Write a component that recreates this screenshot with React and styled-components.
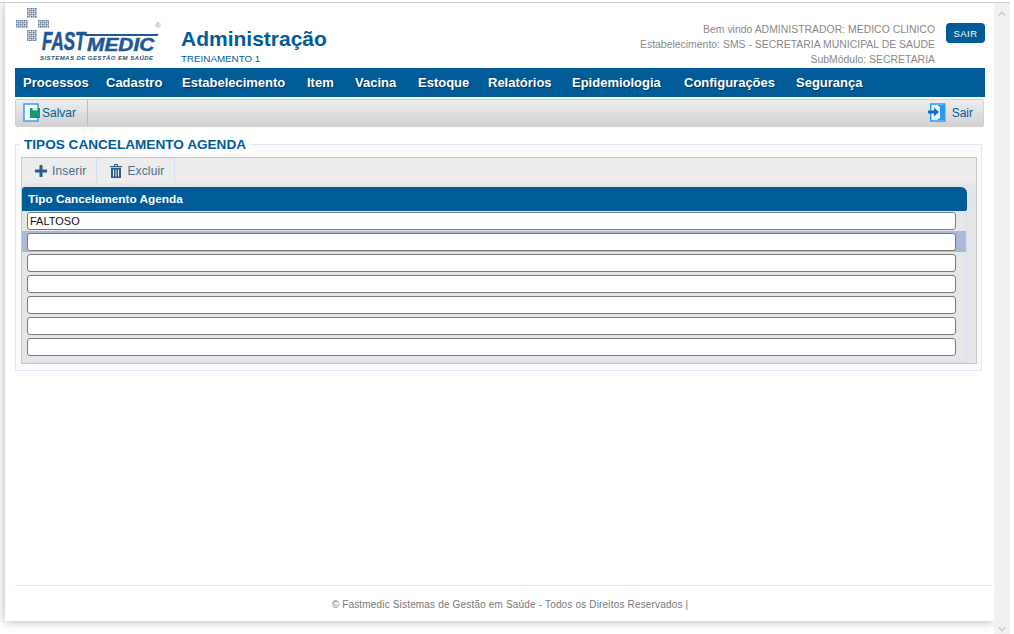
import React from "react";
import styled, { createGlobalStyle } from "styled-components";

const MENU = [
  { label: "Processos", width: 83 },
  { label: "Cadastro", width: 76 },
  { label: "Estabelecimento", width: 125 },
  { label: "Item", width: 48 },
  { label: "Vacina", width: 63 },
  { label: "Estoque", width: 70 },
  { label: "Relatórios", width: 84 },
  { label: "Epidemiologia", width: 112 },
  { label: "Configurações", width: 112 },
  { label: "Segurança", width: 87 },
];
const ROWS = ["FALTOSO", "", "", "", "", "", ""];

const GlobalStyle = createGlobalStyle`
  html, body { margin: 0; padding: 0; height: 100%; background: #fff; overflow: hidden; }
  body { font-family: "Liberation Sans", Arial, sans-serif; }
  * { box-sizing: border-box; }
`;

function LogoCross() {
  const block = (x, y, w, h) => {
    const dots = [];
    for (let i = 0; i < h; i += 2) {
      for (let j = 0; j < w; j += 2) {
        dots.push(<rect key={`${x}-${y}-${i}-${j}`} x={x + j} y={y + i} width="1.6" height="1.6" fill={(i + j) % 4 === 0 ? "#5f748e" : "#8c9cb2"} />);
      }
    }
    return dots;
  };
  return (
    <svg width="34" height="33" viewBox="0 0 34 33">
      {block(12, 0, 10, 10)}
      {block(1, 12, 11, 8)}
      {block(23, 12, 11, 8)}
      {block(12, 22, 10, 11)}
    </svg>
  );
}

function SaveIcon() {
  return (
    <svg width="18" height="20" viewBox="0 0 18 20">
      <path d="M1 1h14v17H1z" fill="#fff" stroke="#3d9ff0" strokeWidth="1.6" />
      <path d="M7 5h10v10H7z" fill="#129a77" />
      <path d="M9.500 5h5v2.500h-5z" fill="#c9efe2" />
    </svg>
  );
}

function ExitIcon() {
  return (
    <svg width="18" height="20" viewBox="0 0 18 20">
      <path d="M2.700 1h14v17h-14z" fill="#eaf5ff" stroke="#2c9af0" strokeWidth="1.500" />
      <path d="M9 2l7 0v15l-7 0 3-2V4z" fill="#2c9af0" />
      <path d="M0 7.500h6V4.500l5 4.500-5 4.500v-3H0z" fill="#176fbe" />
    </svg>
  );
}

function PlusIcon() {
  return (
    <svg width="12" height="12" viewBox="0 0 12 12">
      <path d="M4.500 0h3v4.500H12v3H7.500V12h-3V7.500H0v-3h4.500z" fill="#2d5c88" />
    </svg>
  );
}

function TrashIcon() {
  return (
    <svg width="12" height="14" viewBox="0 0 12 14">
      <path d="M0 2h12v1.300H0zM4 0h4v2H7V1H5v1H4z" fill="#2d5c88" />
      <path d="M1 4h10v10H1zM3 5.500v7h1v-7zM5.500 5.500v7h1v-7zM8 5.500v7h1v-7z" fill="#2d5c88" fillRule="evenodd" />
    </svg>
  );
}

function App() {
  return (
    <Page>
      <GlobalStyle />
      <Frame>
        <Sheet>
          <Header>
            <Logo>
              <CrossSlot>
                <LogoCross />
              </CrossSlot>
              <Registered>®</Registered>
              <Stripe />
              <LogoFast>FAST</LogoFast>
              <LogoMedic>MEDIC</LogoMedic>
              <LogoTag>SISTEMAS DE GESTÃO EM SAÚDE</LogoTag>
            </Logo>
            <TitleBlock>
              <Title>Administração</Title>
              <Subtitle>TREINAMENTO 1</Subtitle>
            </TitleBlock>
            <UserInfo>
              <span>Bem vindo ADMINISTRADOR: MEDICO CLINICO</span>
              <span>Estabelecimento: SMS - SECRETARIA MUNICIPAL DE SAUDE</span>
              <span>SubMódulo: SECRETARIA</span>
            </UserInfo>
            <LogoutButton>SAIR</LogoutButton>
          </Header>
          <Nav>
            {MENU.map((item) => (
              <NavItem key={item.label} $width={item.width}>
                {item.label}
              </NavItem>
            ))}
          </Nav>
          <ActionBar>
            <SaveButton>
              <SaveIcon />
              Salvar
            </SaveButton>
            <ExitButton>
              <ExitIcon />
              Sair
            </ExitButton>
          </ActionBar>
          <Group>
            <Legend>TIPOS CANCELAMENTO AGENDA</Legend>
            <GridBox>
              <GridToolbar>
                <GridAction>
                  <PlusIcon />
                  Inserir
                </GridAction>
                <GridAction>
                  <TrashIcon />
                  Excluir
                </GridAction>
              </GridToolbar>
              <GridHead>Tipo Cancelamento Agenda</GridHead>
              <GridBody>
                {ROWS.map((value, i) => (
                  <GridRow key={i} $selected={i === 1}>
                    <CellInput defaultValue={value} />
                  </GridRow>
                ))}
              </GridBody>
            </GridBox>
          </Group>
          <Footer>© Fastmedic Sistemas de Gestão em Saúde - Todos os Direitos Reservados |</Footer>
        </Sheet>
        <Scrollbar>
          <ScrollArrow viewBox="0 0 10 6">
            <path d="M1 5l4-4 4 4" />
          </ScrollArrow>
          <ScrollArrow viewBox="0 0 10 6">
            <path d="M1 1l4 4 4-4" />
          </ScrollArrow>
        </Scrollbar>
      </Frame>
    </Page>
  );
}

const Page = styled.div`
  width: 1014px;
  height: 634px;
  padding: 2px 4px 0 0;
  background: #fff;
  overflow: hidden;
`;
const Frame = styled.div`
  height: 632px;
  display: flex;
  align-items: flex-start;
  justify-content: space-between;
  padding-left: 5px;
  border-top: 1px solid #cdcdcd;
  overflow: hidden;
`;
const Sheet = styled.div`
  width: 989px;
  height: 618px;
  flex-shrink: 0;
  padding-left: 10px;
  background: #fff;
  box-shadow: 0 0 10px rgba(0, 0, 0, 0.32);
  display: flex;
  flex-direction: column;
`;
const Header = styled.header`
  height: 65px;
  width: 970px;
  display: flex;
  align-items: flex-start;
  flex-shrink: 0;
`;
const Logo = styled.div`
  position: relative;
  width: 146px;
  height: 65px;
  flex-shrink: 0;
`;
const CrossSlot = styled.div`
  position: absolute;
  left: 0;
  top: 5px;
  line-height: 0;
`;
const Registered = styled.span`
  position: absolute;
  right: 0;
  top: 18px;
  font-size: 8px;
  color: #8a97a8;
`;
const Stripe = styled.div`
  position: absolute;
  left: 70px;
  right: 3px;
  top: 31px;
  height: 2px;
  background: #1f5896;
  transform: skewX(-20deg);
`;
const LogoFast = styled.span`
  position: absolute;
  left: 27px;
  top: 26px;
  font-size: 25px;
  line-height: 25px;
  font-weight: 700;
  font-style: italic;
  color: #1f5896;
  white-space: nowrap;
  -webkit-text-stroke: 0.6px #1f5896;
  transform: scaleX(0.68);
  transform-origin: left center;
`;
const LogoMedic = styled.span`
  position: absolute;
  left: 72px;
  top: 33px;
  font-size: 18px;
  line-height: 18px;
  font-weight: 700;
  font-style: italic;
  color: #1f5896;
  white-space: nowrap;
  -webkit-text-stroke: 0.5px #1f5896;
  transform: scaleX(1.16);
  transform-origin: left center;
`;
const LogoTag = styled.span`
  position: absolute;
  left: 25px;
  top: 52px;
  font-size: 6px;
  line-height: 7px;
  font-weight: 700;
  font-style: italic;
  letter-spacing: 0.46px;
  color: #33506e;
  white-space: nowrap;
`;
const TitleBlock = styled.div`
  margin-left: 20px;
  padding-top: 24px;
  display: flex;
  flex-direction: column;
`;
const Title = styled.h1`
  margin: 0;
  font-size: 21px;
  line-height: 24px;
  font-weight: 700;
  color: #005c99;
`;
const Subtitle = styled.div`
  margin-top: 1px;
  font-size: 9.8px;
  line-height: 14px;
  color: #005c99;
`;
const UserInfo = styled.div`
  margin-left: auto;
  padding-top: 19px;
  display: flex;
  flex-direction: column;
  align-items: flex-end;
  font-size: 10.45px;
  line-height: 15px;
  color: #888;
`;
const LogoutButton = styled.button`
  margin: 20px 0 0 11px;
  width: 39px;
  height: 20px;
  padding: 0;
  border: 0;
  border-radius: 4px;
  background: #005c99;
  color: #fff;
  font-family: inherit;
  font-size: 9.5px;
  letter-spacing: 0.5px;
`;
const Nav = styled.nav`
  width: 970px;
  height: 29px;
  flex-shrink: 0;
  display: flex;
  align-items: center;
  padding-left: 8px;
  background: #005c99;
`;
const NavItem = styled.a`
  flex: 0 0 ${(p) => p.$width}px;
  font-size: 13px;
  font-weight: 700;
  color: #fff;
  text-shadow: 1px 1px 1px #00365a;
  white-space: nowrap;
`;
const ActionBar = styled.div`
  margin-top: 2px;
  width: 969px;
  height: 28px;
  flex-shrink: 0;
  display: flex;
  justify-content: space-between;
  background: linear-gradient(to bottom, #ededed, #d2d2d2);
  border: 1px solid #d0d0d0;
  border-radius: 2px;
`;
const ToolButton = styled.button`
  height: 100%;
  display: flex;
  align-items: center;
  padding: 0;
  border: 0;
  background: none;
  font-family: inherit;
  font-size: 12px;
  color: #005c99;
`;
const SaveButton = styled(ToolButton)`
  width: 72px;
  padding-left: 7px;
  gap: 1px;
  border-right: 1px solid #bdbdbd;
`;
const ExitButton = styled(ToolButton)`
  padding-right: 10px;
  gap: 6px;
`;
const Group = styled.section`
  position: relative;
  margin-top: 17px;
  width: 967px;
  height: 227px;
  flex-shrink: 0;
  padding: 12px 5px 0 5px;
  background: #fafafa;
  border: 1px solid #e0e8f8;
`;
const Legend = styled.h2`
  position: absolute;
  left: 4px;
  top: -8px;
  margin: 0;
  padding: 0 4px;
  background: #fff;
  font-size: 13.6px;
  line-height: 16px;
  font-weight: 700;
  color: #005c99;
`;
const GridBox = styled.div`
  width: 956px;
  height: 207px;
  background: #e6e6e6;
  border: 1px solid #c3c8d0;
  display: flex;
  flex-direction: column;
`;
const GridToolbar = styled.div`
  height: 26px;
  flex-shrink: 0;
  display: flex;
  background: #ececec;
  border-bottom: 1px solid #dfe7f7;
`;
const GridAction = styled.button`
  display: flex;
  align-items: center;
  gap: 5px;
  padding: 0 10px 0 13px;
  border: 0;
  border-right: 1px solid #d3def3;
  background: none;
  font-family: inherit;
  font-size: 12px;
  letter-spacing: 0.15px;
  color: #4a6d8f;
`;
const GridHead = styled.div`
  margin-top: 3px;
  width: 945px;
  height: 24px;
  flex-shrink: 0;
  display: flex;
  align-items: center;
  padding-left: 6px;
  background: #005c99;
  border-radius: 3px 6px 0 0;
  font-size: 11.8px;
  font-weight: 700;
  color: #fff;
`;
const GridBody = styled.div`
  width: 945px;
  flex: 1;
  margin-top: -1px;
  border-right: 1px solid #d3def3;
  border-bottom: 1px solid #d3def3;
`;
const GridRow = styled.div`
  height: 21px;
  display: flex;
  align-items: center;
  padding-left: 5px;
  background: ${(p) => (p.$selected ? "#a9b9d6" : "transparent")};
`;
const CellInput = styled.input`
  width: 929px;
  height: 18px;
  padding: 0 2px;
  border: 1px solid #7a7a7a;
  border-radius: 3px;
  background: #fff;
  font-family: inherit;
  font-size: 11px;
  color: #111;
  outline: none;
`;
const Footer = styled.footer`
  margin-top: auto;
  width: 978px;
  height: 36px;
  flex-shrink: 0;
  display: flex;
  align-items: flex-start;
  justify-content: center;
  padding: 13px 0 0 12px;
  border-top: 1px solid #e6e6e6;
  font-size: 10px;
  letter-spacing: 0.17px;
  color: #777;
`;
const Scrollbar = styled.div`
  position: relative;
  width: 16px;
  height: 100%;
  flex-shrink: 0;
  display: flex;
  flex-direction: column;
  justify-content: space-between;
  align-items: center;
  padding: 8px 0 2px;
  background: #f1f1f1;
`;
const ScrollArrow = styled.svg`
  width: 8px;
  height: 6px;
  fill: none;
  stroke: #cfcfcf;
  stroke-width: 2;
`;

export default App;
